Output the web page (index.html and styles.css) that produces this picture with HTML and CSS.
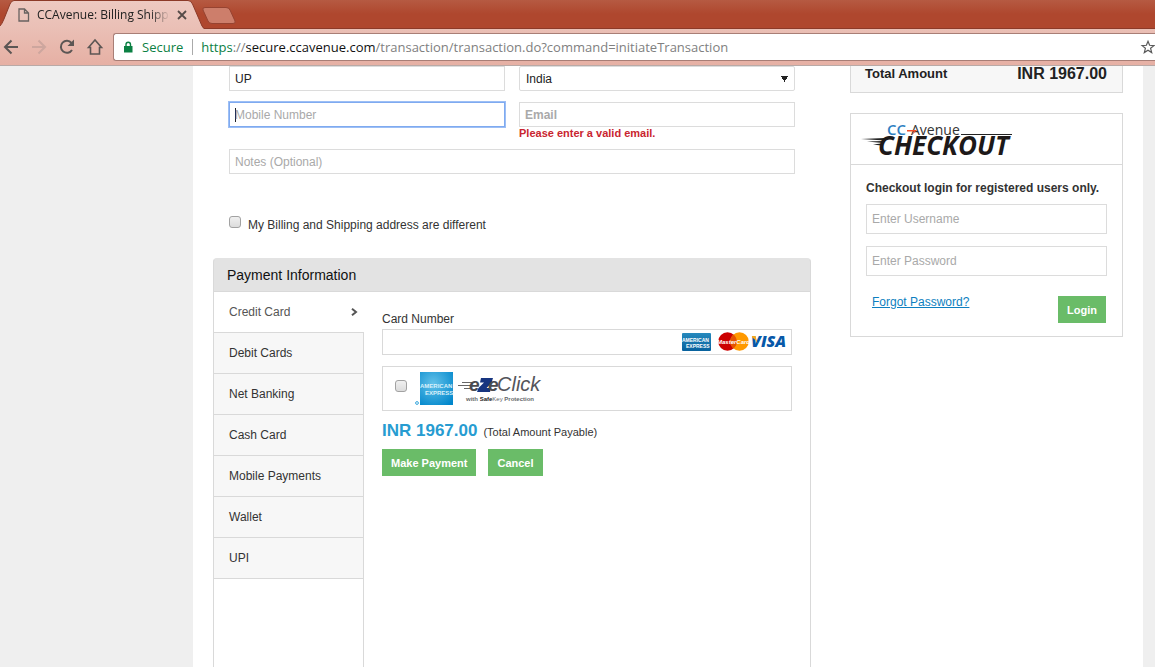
FILE: index.html
```html
<!DOCTYPE html>
<html lang="en">
<head>
<meta charset="utf-8">
<meta name="viewport" content="width=device-width, initial-scale=1">
<title>CCAvenue: Billing Shipping</title>
<link rel="stylesheet" href="styles.css">
</head>
<body>
<header class="browser">
  <div class="tab-strip">
    <svg class="tab-shapes" width="240" height="30" viewBox="0 0 240 30" aria-hidden="true">
      <defs>
        <linearGradient id="tabFill" x1="0" y1="0" x2="0" y2="1"><stop offset="0" stop-color="#edc9c1"/><stop offset="1" stop-color="#eabfb5"/></linearGradient>
      </defs>
      <path d="M0 30V26Q2 24 4 19L10 4Q11.500 .5 14 .5H188Q191 .5 192.500 4L202 26Q203.500 29.500 207 30Z" fill="url(#tabFill)"/>
      <path d="M0 26Q2 24 4 19L10 4Q11.500 .5 14 .5H188Q191 .5 192.500 4L202 26Q203.500 29.500 207 29.500H240" fill="none" stroke="#8c3a28"/>
      <path d="M205 7.500H226Q229 7.500 230 10L235 21Q236 23.500 233 23.500H212Q209 23.500 208 21L203 10Q202 7.500 205 7.500Z" fill="#cd7e6b" stroke="#964331"/>
    </svg>
    <div class="tab">
      <svg width="12" height="14" viewBox="0 0 12 14" fill="none" stroke="#686260" stroke-width="1.300" aria-hidden="true"><path d="M1 1H6.500L10.500 5V13H1ZM6.500 1V5H10.500"/></svg>
      <span class="tab-title">CCAvenue: Billing Shipping</span>
      <button class="bare" aria-label="Close tab"><svg width="10" height="10" viewBox="0 0 10 10" stroke="#554b48" stroke-width="1.800"><path d="M1 1L9 9M9 1L1 9"/></svg></button>
    </div>
  </div>
  <div class="toolbar">
    <nav class="nav-buttons" aria-label="Browser">
      <button class="bare" aria-label="Back"><svg width="16" height="16" viewBox="0 0 16 16" fill="none" stroke="#5c5654" stroke-width="2"><path d="M15 8H2M8.500 1.500L2 8L8.500 14.500"/></svg></button>
      <button class="bare" aria-label="Forward"><svg width="16" height="16" viewBox="0 0 16 16" fill="none" stroke="#cda69e" stroke-width="2"><path d="M1 8H14M7.500 1.500L14 8L7.500 14.500"/></svg></button>
      <button class="bare" aria-label="Reload"><svg width="16" height="16" viewBox="0 0 16 16"><path d="M13 11A6 6 0 1 1 12.500 4" fill="none" stroke="#5c5654" stroke-width="2"/><path d="M15 .5V7H8.500Z" fill="#5c5654"/></svg></button>
      <button class="bare" aria-label="Home"><svg width="16" height="18" viewBox="0 0 16 18" fill="none" stroke="#5c5654" stroke-width="1.600"><path d="M1.500 9.500L8 2L14.500 9.500H12.500V16H3.500V9.500Z"/></svg></button>
    </nav>
    <div class="address">
      <svg width="10" height="12" viewBox="0 0 10 12" aria-hidden="true"><rect x="1" y="5" width="8.500" height="6.500" fill="#0b8043"/><path d="M3 5V3.500A2.200 2.200 0 0 1 7.500 3.500V5" fill="none" stroke="#0b8043" stroke-width="1.400"/></svg>
      <span class="secure">Secure</span>
      <span class="url"><span class="scheme">https</span>://<span class="host">secure.ccavenue.com</span>/transaction/transaction.do?command=initiateTransaction</span>
      <button class="bare star" aria-label="Bookmark"><svg width="14" height="14" viewBox="0 0 14 14" fill="none" stroke="#5a5a5a" stroke-width="1.200"><path d="M7 1.300L8.600 5.300L12.900 5.600L9.600 8.300L10.700 12.600L7 10.200L3.300 12.600L4.400 8.300L1.100 5.600L5.400 5.300Z"/></svg></button>
    </div>
  </div>
</header>

<div class="page">
  <main class="main">
    <form class="billing">
      <input class="field" type="text" value="UP" aria-label="State">
      <select class="field country" aria-label="Country"><option>India</option></select>
      <input class="field active" type="tel" placeholder="Mobile Number" aria-label="Mobile Number">
      <div class="email">
        <input class="field invalid" type="email" placeholder="Email" aria-label="Email">
        <p class="error">Please enter a valid email.</p>
      </div>
      <input class="field notes" type="text" placeholder="Notes (Optional)" aria-label="Notes">
      <label class="different"><input class="check" type="checkbox"><span>My Billing and Shipping address are different</span></label>
    </form>

    <section class="payment">
      <h2 class="payment-title">Payment Information</h2>
      <div class="payment-body">
        <nav class="methods" aria-label="Payment methods">
          <a class="method selected" href="#">Credit Card<svg width="7" height="8" viewBox="0 0 7 8" fill="none" stroke="#555" stroke-width="2" aria-hidden="true"><path d="M1 .7L5 4L1 7.300"/></svg></a>
          <a class="method" href="#">Debit Cards</a>
          <a class="method" href="#">Net Banking</a>
          <a class="method" href="#">Cash Card</a>
          <a class="method" href="#">Mobile Payments</a>
          <a class="method" href="#">Wallet</a>
          <a class="method" href="#">UPI</a>
        </nav>
        <form class="card-form">
          <label class="card-label" for="card">Card Number</label>
          <div class="card-box">
            <input class="card-input" id="card" type="text">
            <svg width="106" height="20" viewBox="0 0 106 20" role="img" aria-label="American Express, MasterCard, Visa">
              <defs><linearGradient id="amexSmall" x1="0" y1="0" x2="0" y2="1"><stop offset="0" stop-color="#2689bd"/><stop offset="1" stop-color="#07619d"/></linearGradient></defs>
              <rect x="0" y="1" width="29" height="18" rx="1" fill="url(#amexSmall)"/>
              <text class="logo-sans" x="0" y="9.500" font-size="5" fill="#fff">AMERICAN</text>
              <text class="logo-sans" x="4" y="15.500" font-size="5" fill="#fff">EXPRESS</text>
              <circle cx="45.500" cy="9.500" r="9.300" fill="#c00"/><circle cx="57.500" cy="9.500" r="9.300" fill="#f90"/>
              <path d="M51.500 2.400A9.300 9.300 0 0 1 51.500 16.600A9.300 9.300 0 0 1 51.500 2.400Z" fill="#e65300"/>
              <text class="logo-sans logo-italic" x="51.500" y="12" text-anchor="middle" font-size="6" fill="#fff">MasterCard</text>
              <text class="logo-visa" x="69" y="15" fill="#0758a8">VISA</text>
              <path d="M70 4H73.500L75.500 11.500Q73.500 7 70 5.500Z" fill="#f6a71c"/>
            </svg>
          </div>
          <div class="eze">
            <input class="check" type="checkbox" aria-label="American Express ezeClick">
            <svg width="128" height="36" viewBox="0 0 128 36" role="img" aria-label="American Express ezeClick with SafeKey Protection">
              <defs><radialGradient id="amexLarge" cx=".4" cy=".35" r=".8"><stop offset="0" stop-color="#62c1e9"/><stop offset="1" stop-color="#0086cb"/></radialGradient></defs>
              <rect x="5" y="1" width="33" height="33" fill="url(#amexLarge)"/>
              <text class="logo-sans" x="5" y="17" font-size="6" fill="#d9f0fa">AMERICAN</text>
              <text class="logo-sans" x="10" y="24" font-size="6" fill="#d9f0fa">EXPRESS</text>
              <circle cx="2" cy="32" r="1.400" fill="none" stroke="#39a7dc"/>
              <path d="M47 11.500H60M43 14.500H56M49 17.500H55" stroke="#666" stroke-width="1"/>
              <text class="logo-click" x="54" y="20" font-size="19" font-weight="700" fill="#4b4c51">e</text>
              <path d="M66 7H78L76.500 12L71.500 17H76L75 21H62L63.500 17L69 11.500H65Z" fill="#173580"/>
              <text class="logo-click" x="73" y="20" font-size="19" font-weight="700" fill="#4b4c51">e</text>
              <text class="logo-click" x="82" y="20" font-size="20" fill="#54555b">Click</text>
              <text class="logo-sans" x="51" y="30" font-size="6" fill="#66686b">with <tspan fill="#222">Safe</tspan><tspan font-weight="400">Key</tspan> Protection</text>
            </svg>
          </div>
          <p class="total"><strong>INR 1967.00</strong><span>(Total Amount Payable)</span></p>
          <div class="actions">
            <button class="btn" type="button">Make Payment</button>
            <button class="btn" type="button">Cancel</button>
          </div>
        </form>
      </div>
    </section>
  </main>

  <aside class="side">
    <div class="summary"><span>Total Amount</span><strong>INR 1967.00</strong></div>
    <form class="login">
      <div class="login-head">
        <svg width="154" height="42" viewBox="0 0 154 42" role="img" aria-label="CCAvenue Checkout">
          <text class="logo-open" x="26" y="14" font-size="15" font-weight="600" fill="#2f7fc2">CC</text>
          <text class="logo-open" x="50" y="14" font-size="14" fill="#333">Avenue</text>
          <path d="M46 9H56L51 14L53 10.500H46Z" fill="#f04e2b"/>
          <path d="M100 13.500H151" stroke="#222" stroke-width="1.200"/>
          <path d="M0 18L24 17V19.500ZM6 20.500L22 20V22ZM12 23.500L20 22.500V24.500Z" fill="#222"/>
          <text class="logo-checkout" x="17" y="34" fill="#1d1919">CHECKOUT</text>
        </svg>
      </div>
      <div class="login-body">
        <h3 class="login-title">Checkout login for registered users only.</h3>
        <input class="field tall" type="text" placeholder="Enter Username" aria-label="Username">
        <input class="field tall" type="password" placeholder="Enter Password" aria-label="Password">
        <div class="login-foot">
          <a class="forgot" href="#">Forgot Password?</a>
          <button class="btn" type="button">Login</button>
        </div>
      </div>
    </form>
  </aside>
</div>
</body>
</html>
```
FILE: styles.css
```css
* { box-sizing: border-box; }
body {
  margin: 0;
  height: 100vh;
  overflow: hidden;
  display: flex;
  flex-direction: column;
  background: #efefef;
  color: #333;
  font: 12px/16px "Liberation Sans", Arial, sans-serif;
}
h2, h3, p { margin: 0; }
svg { display: block; flex: none; overflow: visible; }
.bare { border: 0; padding: 0; background: none; }

/* Browser frame */
.browser { flex: none; font-family: "Open Sans", "Noto Sans", sans-serif; }
.tab-strip {
  position: relative;
  height: 29px;
  background: linear-gradient(#b65a42, #af472e 50%);
  border-bottom: 1px solid #8c3a28;
}
.tab-shapes { position: absolute; left: 0; top: 0; }
.tab {
  position: relative;
  display: flex;
  align-items: center;
  width: 187px;
  height: 29px;
  padding-left: 18px;
}
.tab-title {
  flex: 1;
  margin: 0 7px;
  overflow: hidden;
  white-space: nowrap;
  font-size: 12px;
  color: #222;
  mask-image: linear-gradient(90deg, #000 85%, transparent);
}
.toolbar {
  position: relative;
  display: flex;
  height: 37px;
  padding: 4px 0;
  background: linear-gradient(#eabfb5, #e6b0a4);
  border-bottom: 1px solid #b9aaa7;
}
.nav-buttons { display: flex; align-items: center; gap: 12px; width: 113px; padding-left: 3px; }
.address {
  flex: 1;
  display: flex;
  align-items: center;
  padding-left: 9px;
  background: #fff;
  border: 1px solid #a87e76;
  border-right: 0;
  border-radius: 3px 0 0 3px;
  font-size: 13px;
  white-space: nowrap;
}
.secure { margin: 0 8px 0 9px; padding-right: 9px; border-right: 1px solid #aaa; color: #0b8043; }
.url { flex: 1; color: #808080; }
.scheme { color: #0b8043; }
.host { color: #111; }

/* Page */
.page {
  flex: 1;
  min-height: 0;
  display: flex;
  gap: 39px;
  margin: 0 12px 0 193px;
  padding: 0 20px;
  background: #fff;
}
.main { flex: 1; display: flex; flex-direction: column; }
.side { width: 273px; }

.field {
  width: 100%;
  height: 25px;
  padding: 0 5px;
  border: 1px solid #dcdcdc;
  border-radius: 0;
  background: #fff;
  color: #222;
  font: 12px "Liberation Sans", Arial, sans-serif;
}
.field::placeholder { color: #a9a9a9; opacity: 1; }
.invalid::placeholder { font-weight: 700; }
.country {
  appearance: none;
  padding-left: 6px;
  border-radius: 2px;
  background: conic-gradient(from -30deg at 50% 100%, #222 60deg, #fff 0) right 6px center / 7px 6px no-repeat #fff;
}
.active {
  border-color: #7faaf0;
  outline: 1px solid #9dbff5;
  background: linear-gradient(#222, #222) 5px center / 1px 14px no-repeat #fff;
}
.check {
  appearance: none;
  flex: none;
  width: 12px;
  height: 12px;
  margin: 0;
  border: 1px solid #a2a2a2;
  border-radius: 3px;
  background: linear-gradient(#f0f0f0, #dcdcdc);
}

.billing {
  display: grid;
  grid-template-columns: 1fr 1fr;
  gap: 11px 14px;
  padding: 0 16px;
}
.email { height: 36px; }
.error { font-size: 11px; line-height: 13px; font-weight: 700; color: #c9252f; }
.notes, .different { grid-column: 1 / -1; }
.different { display: flex; gap: 7px; margin: 31px 0 23px; line-height: 19px; }

.payment { flex: 1; display: flex; flex-direction: column; }
.payment-title {
  height: 34px;
  padding: 0 13px;
  border: 1px solid #d9d9d9;
  border-top-color: #e3e3e3;
  border-radius: 4px 4px 0 0;
  background: #e3e3e3;
  color: #111;
  font-size: 14px;
  line-height: 32px;
  font-weight: 400;
}
.payment-body { flex: 1; display: flex; border: solid #d9d9d9; border-width: 0 1px; }
.methods { width: 150px; border-right: 1px solid #d9d9d9; }
.method {
  display: flex;
  align-items: center;
  justify-content: space-between;
  height: 41px;
  padding: 0 6px 0 15px;
  border-bottom: 1px solid #d9d9d9;
  background: #f7f7f7;
  color: #333;
  text-decoration: none;
}
.selected { width: 150px; background: #fff; color: #555; }
.card-form { flex: 1; padding: 19px 18px; }
.card-label { display: block; height: 18px; }
.card-box, .eze {
  display: flex;
  align-items: center;
  border: 1px solid #d9d9d9;
}
.card-box { height: 26px; padding-right: 3px; }
.card-input { flex: 1; border: 0; padding: 0 5px; }
.eze { height: 45px; margin-top: 11px; padding-left: 12px; gap: 8px; }
.eze .check { margin-bottom: 6px; }
.total { display: flex; align-items: baseline; gap: 6px; margin: 10px 0 7px; font-size: 11px; line-height: 20px; }
.total strong { color: #279cd1; font-size: 17px; }
.actions { display: flex; gap: 12px; }
.btn {
  height: 27px;
  padding: 0 9px;
  border: 0;
  background: #6abc68;
  color: #fff;
  font: bold 11px "Liberation Sans", Arial, sans-serif;
}

.summary {
  display: flex;
  justify-content: space-between;
  height: 27px;
  padding: 0 15px 0 14px;
  border: 1px solid #d9d9d9;
  border-top: 0;
  background: #f7f7f7;
  color: #222;
  font-size: 13px;
  line-height: 16px;
  font-weight: 700;
}
.summary strong { font-size: 16px; }
.login { margin-top: 20px; border: 1px solid #d9d9d9; }
.login-head { height: 51px; padding: 7px 10px 0; border-bottom: 1px solid #d9d9d9; }
.login-body { padding: 15px 15px 13px; }
.login-title { margin-bottom: 8px; font-size: 12px; line-height: 16px; }
.tall { display: block; height: 30px; margin-bottom: 12px; }
.login-foot { display: flex; justify-content: space-between; margin-top: 20px; padding: 0 1px 0 6px; }
.forgot { color: #0d7fc0; line-height: 12px; }

/* Logo lettering */
.logo-sans { font-family: "Liberation Sans", Arial, sans-serif; font-weight: 700; }
.logo-italic { font-style: italic; }
.logo-visa { font: italic 800 16px "Open Sans", sans-serif; }
.logo-click { font-family: "Liberation Sans", Arial, sans-serif; font-style: italic; }
.logo-open { font-family: "Open Sans", sans-serif; }
.logo-checkout { font: italic 700 26px "Open Sans", sans-serif; }
```
